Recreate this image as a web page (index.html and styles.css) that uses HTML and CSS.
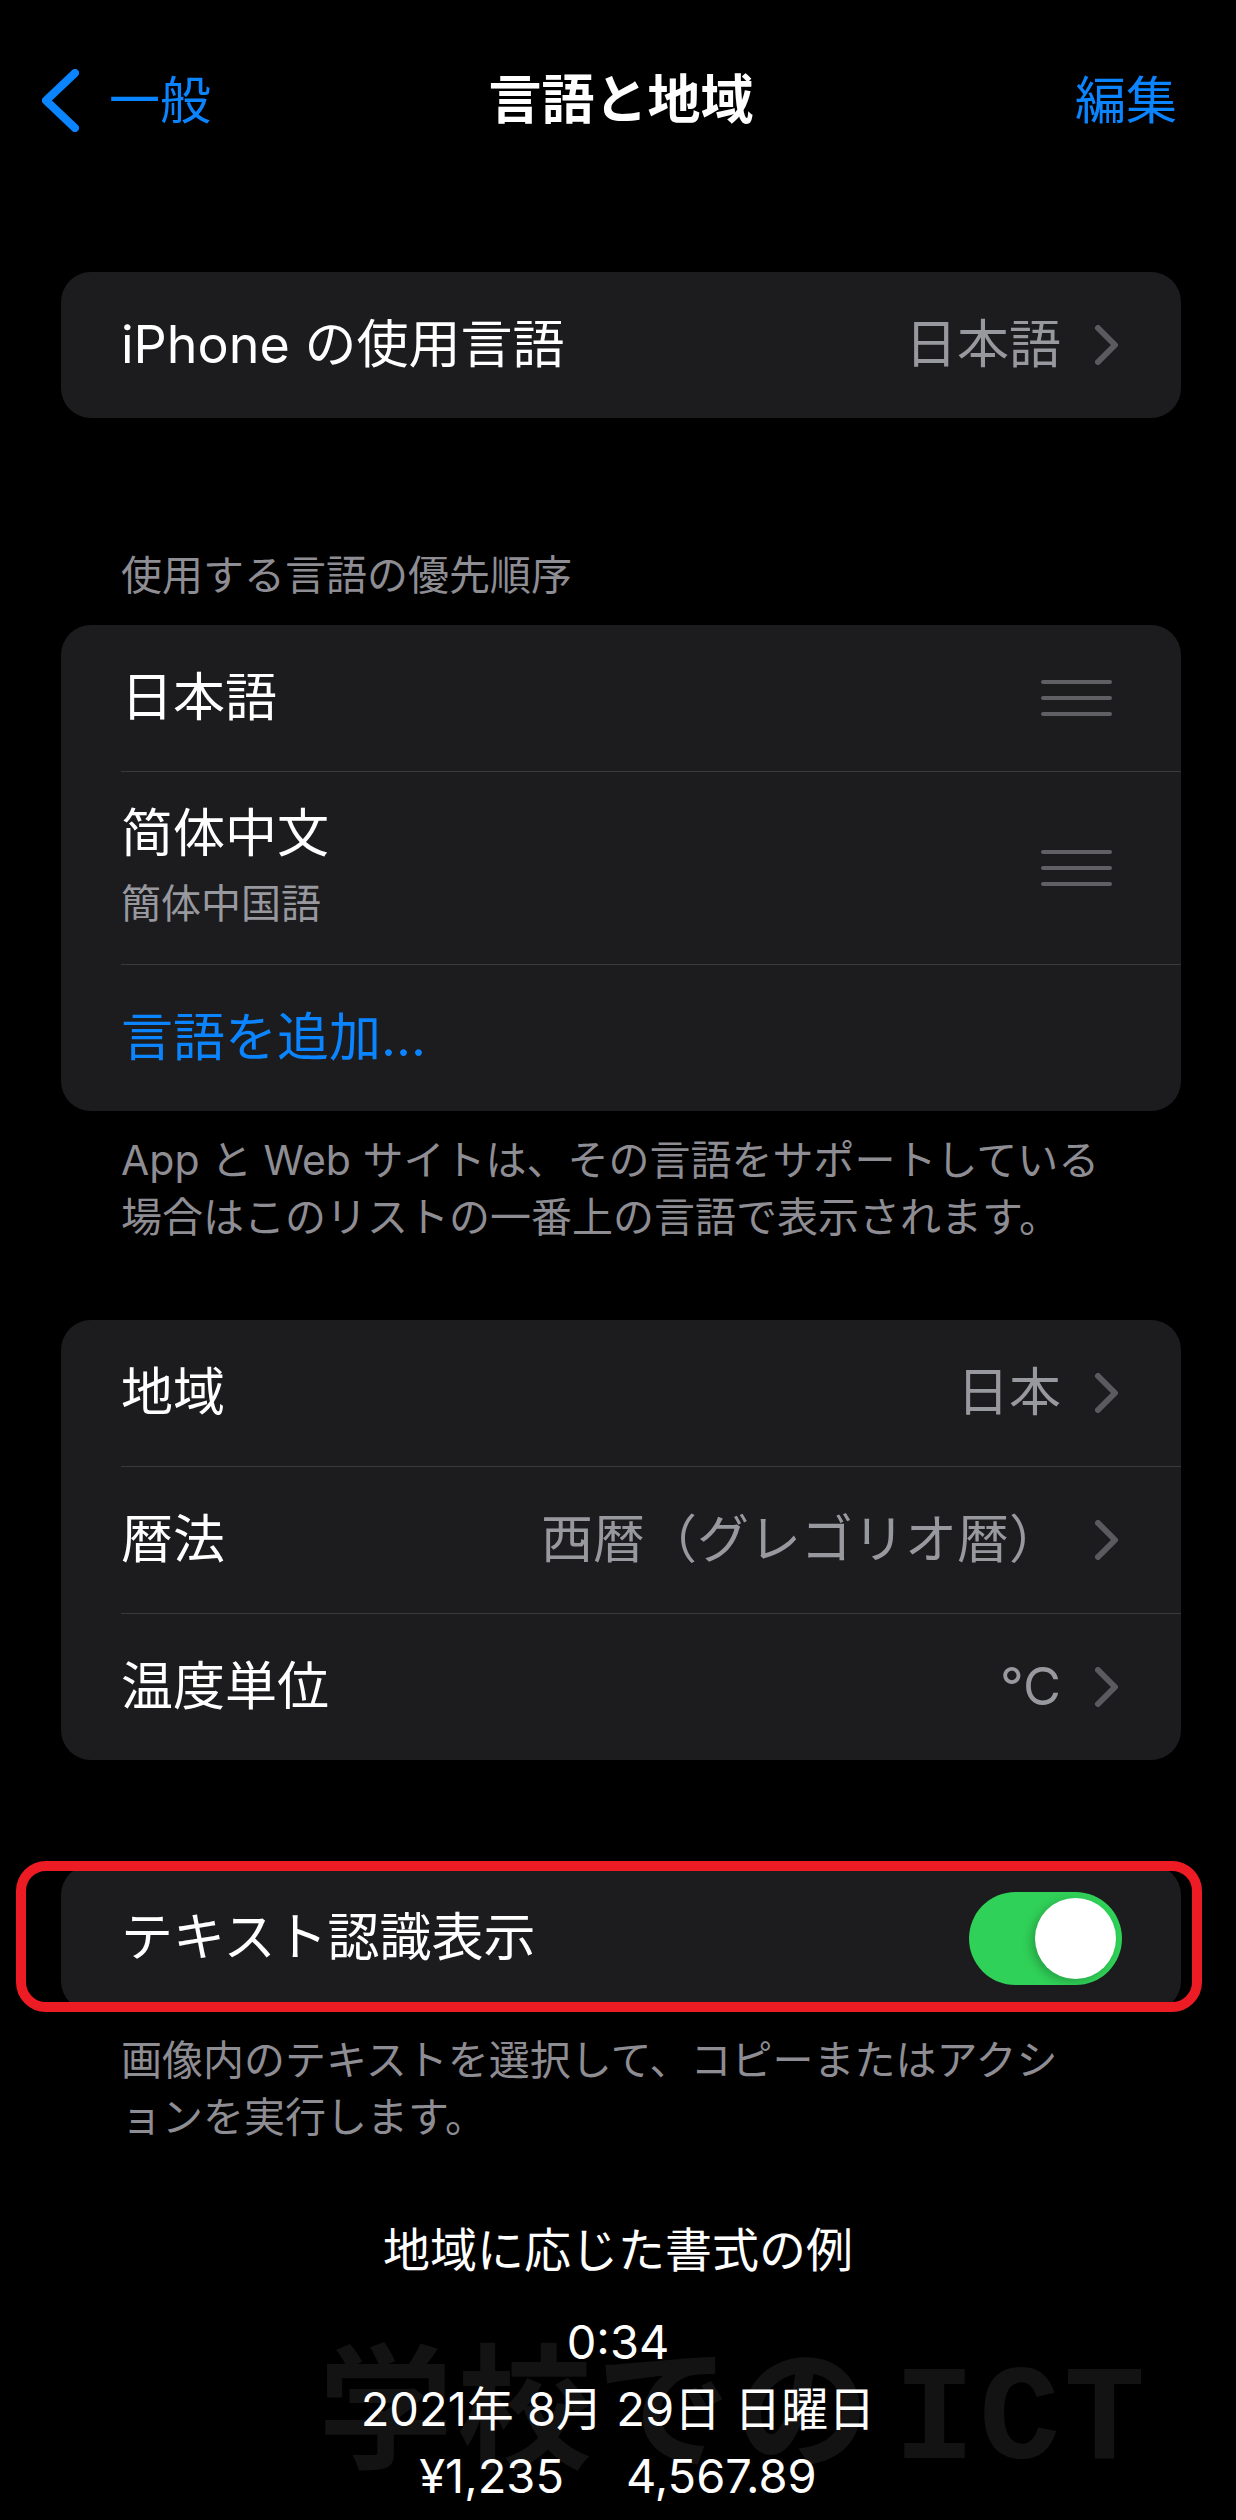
FILE: index.html
```html
<!DOCTYPE html>
<html lang="ja">

<head>
    <meta charset="UTF-8">
    <meta name="viewport" content="width=device-width, initial-scale=1.0">
    <title>言語と地域</title>
    <link rel="stylesheet" href="styles.css">
</head>

<body>
    <div class="nav">
        <a href="#" class="back">
            <svg viewBox="0 0 37 63" width="37" height="63">
                <polyline points="33,4 4,31.5 33,59" fill="none" stroke="#0a84ff" stroke-width="8" stroke-linecap="round" stroke-linejoin="round" />
            </svg>
            <span>一般</span>
        </a>
        <h1 class="title">言語と地域</h1>
        <a href="#" class="edit">編集</a>
    </div>

    <div class="content">
        <div class="group">
            <div class="row">
                <span class="label">iPhone の使用言語</span>
                <span class="value">日本語</span>
                <svg class="chev" viewBox="0 0 24 40" width="24" height="40">
                    <polyline points="3,3 20,20 3,37" fill="none" stroke="#5a5a5f" stroke-width="6" stroke-linecap="round" stroke-linejoin="round" />
                </svg>
            </div>
        </div>

        <div class="section-head">使用する言語の優先順序</div>
        <div class="group">
            <div class="row">
                <span class="label">日本語</span>
                <svg class="handle" viewBox="0 0 71 36" width="71" height="36">
                    <rect x="0" y="0" width="71" height="4" rx="2" fill="#5f5f64" />
                    <rect x="0" y="16" width="71" height="4" rx="2" fill="#5f5f64" />
                    <rect x="0" y="32" width="71" height="4" rx="2" fill="#5f5f64" />
                </svg>
            </div>
            <div class="row row-tall">
                <div class="label">
                    <div class="stack-title">简体中文</div>
                    <div class="stack-sub">簡体中国語</div>
                </div>
                <svg class="handle" viewBox="0 0 71 36" width="71" height="36">
                    <rect x="0" y="0" width="71" height="4" rx="2" fill="#5f5f64" />
                    <rect x="0" y="16" width="71" height="4" rx="2" fill="#5f5f64" />
                    <rect x="0" y="32" width="71" height="4" rx="2" fill="#5f5f64" />
                </svg>
            </div>
            <div class="row">
                <span class="label link">言語を追加...</span>
            </div>
        </div>
        <p class="foot">App と Web サイトは、その言語をサポートしている<br>場合はこのリストの一番上の言語で表示されます。</p>

        <div class="group group-region">
            <div class="row">
                <span class="label">地域</span>
                <span class="value">日本</span>
                <svg class="chev" viewBox="0 0 24 40" width="24" height="40">
                    <polyline points="3,3 20,20 3,37" fill="none" stroke="#5a5a5f" stroke-width="6" stroke-linecap="round" stroke-linejoin="round" />
                </svg>
            </div>
            <div class="row">
                <span class="label">暦法</span>
                <span class="value">西暦（グレゴリオ暦）</span>
                <svg class="chev" viewBox="0 0 24 40" width="24" height="40">
                    <polyline points="3,3 20,20 3,37" fill="none" stroke="#5a5a5f" stroke-width="6" stroke-linecap="round" stroke-linejoin="round" />
                </svg>
            </div>
            <div class="row">
                <span class="label">温度単位</span>
                <span class="value">°C</span>
                <svg class="chev" viewBox="0 0 24 40" width="24" height="40">
                    <polyline points="3,3 20,20 3,37" fill="none" stroke="#5a5a5f" stroke-width="6" stroke-linecap="round" stroke-linejoin="round" />
                </svg>
            </div>
        </div>

        <div class="highlight">
            <div class="group">
                <div class="row">
                    <span class="label">テキスト認識表示</span>
                    <div class="switch"><div class="knob"></div></div>
                </div>
            </div>
        </div>
        <p class="foot">画像内のテキストを選択して、コピーまたはアクシ<br>ョンを実行します。</p>

        <div class="example">
            <div class="watermark">学校での<span class="wm-latin">ICT</span></div>
            <div class="example-head">地域に応じた書式の例</div>
            <div class="example-line">0:34</div>
            <div class="example-line">2021年 8月 29日 日曜日</div>
            <div class="example-line">¥1,235<span class="gap"></span>4,567.89</div>
        </div>
    </div>
</body>

</html>
```

FILE: styles.css
```css
* {
    box-sizing: border-box;
}

body {
    margin: 0;
    background: #000000;
    color: #ffffff;
    font-family: Inter, "Noto Sans CJK JP", sans-serif;
    width: 1236px;
    height: 2520px;
    overflow: hidden;
}

.nav {
    height: 200px;
    display: grid;
    grid-template-columns: 1fr auto 1fr;
    align-items: center;
    padding: 0 42px 0 48px;
}

.back {
    display: flex;
    align-items: center;
    gap: 30px;
    margin-left: -6px;
    color: #0a84ff;
    text-decoration: none;
    font-size: 51px;
    line-height: 63px;
}

.back svg {
    display: block;
}

.title {
    margin: 0;
    font-size: 53px;
    font-weight: 700;
    line-height: 63px;
}

.edit {
    justify-self: end;
    margin-right: 17px;
    color: #0a84ff;
    text-decoration: none;
    font-size: 51px;
    line-height: 63px;
}

.content {
    padding: 72px 55px 0 61px;
}

.group {
    background: #1c1c1e;
    border-radius: 30px;
    padding-left: 60px;
}

.row {
    display: flex;
    align-items: center;
    height: 146px;
    padding-right: 62px;
    font-size: 52px;
    line-height: 62px;
}

.row + .row {
    height: 147px;
    border-top: 1px solid #3a3a3d;
}

.row.row-tall {
    height: 193px;
}

.label {
    flex: 1;
}

.value {
    color: #98989f;
    margin-right: 34px;
}

.chev {
    display: block;
}

.handle {
    display: block;
    margin-right: 7px;
}

.stack-title {
    line-height: 60px;
}

.stack-sub {
    margin-top: 12px;
    font-size: 40px;
    line-height: 56px;
    color: #98989f;
}

.link {
    color: #0a84ff;
}

.section-head {
    margin: 132px 0 25px;
    padding-left: 60px;
    font-size: 41px;
    line-height: 50px;
    color: #8d8d93;
}

.foot {
    margin: 21px 0 0;
    padding-left: 60px;
    font-size: 41px;
    line-height: 57px;
    color: #8d8d93;
}

.group-region {
    margin-top: 74px;
}

.highlight {
    position: relative;
    margin-top: 105px;
}

.highlight::after {
    content: "";
    position: absolute;
    left: -45px;
    right: -21px;
    top: -4px;
    bottom: -1px;
    border: 10px solid #ed1c24;
    border-radius: 30px;
}

.switch {
    position: relative;
    width: 153px;
    height: 93px;
    margin-right: -3px;
    border-radius: 47px;
    background: #30d158;
}

.knob {
    position: absolute;
    top: 6px;
    right: 6px;
    width: 81px;
    height: 81px;
    border-radius: 50%;
    background: #ffffff;
    box-shadow: -4px 3px 10px rgba(0, 0, 0, 0.22);
}

.example {
    position: relative;
    margin-top: 74px;
    margin-left: -61px;
    margin-right: -55px;
    text-align: center;
    font-size: 47px;
}

.example-head,
.example-line {
    position: relative;
}

.example-head {
    line-height: 60px;
    margin-bottom: 28px;
}

.example-line {
    line-height: 67px;
}

.gap {
    display: inline-block;
    width: 62px;
}

.watermark {
    position: absolute;
    left: 318px;
    top: 122px;
    font-size: 135px;
    line-height: 1;
    font-weight: 700;
    color: #131313;
    white-space: nowrap;
    letter-spacing: 4px;
}

.wm-latin {
    font-family: "Liberation Mono", monospace;
    margin-left: 20px;
}
```
